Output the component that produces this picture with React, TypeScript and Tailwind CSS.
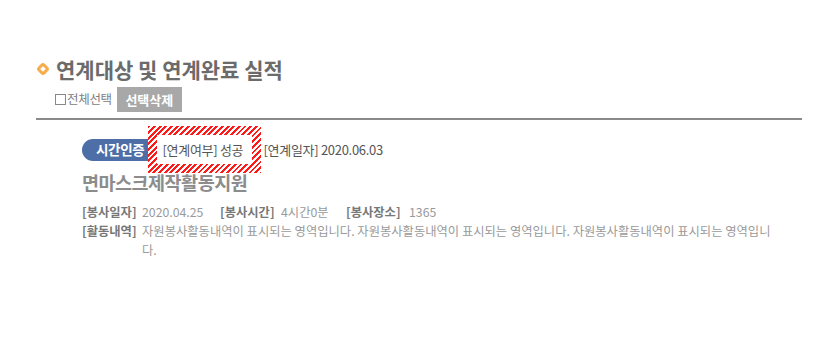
export default function App() {
  const font = { fontFamily: '"Noto Sans CJK KR", "Noto Sans", sans-serif' };
  const hatch =
    "bg-[repeating-linear-gradient(135deg,#ff1a1a_0px,#ff1a1a_2px,#ffffff_2px,#ffffff_4px)]";

  return (
    <div className="w-[838px] h-[360px] bg-white overflow-hidden" style={font}>
      <div className="pt-[54px] pl-[36px] pr-[36px]">
        {/* title */}
        <div className="flex items-center gap-[6px] h-[30px]">
          <span className="w-[14px] h-[14px] flex items-center justify-center">
            <span className="w-[10px] h-[10px] rotate-45 rounded-[3px] border-[3px] border-[#f7ad4a] bg-white" />
          </span>
          <h2 className="text-[21px] font-bold text-[#6b6b6b] leading-none">
            연계대상 및 연계완료 실적
          </h2>
        </div>

        {/* controls */}
        <div className="flex items-center mt-[3px] pl-[19px] h-[25px]">
          <label className="flex items-center text-[12.5px] text-[#808080] tracking-[-0.3px]">
            <span className="w-[11px] h-[11px] border border-[#888] bg-white mr-[1px]" />
            전체선택
          </label>
          <button className="ml-[5px] h-[25px] w-[65px] bg-[#a8a8a8] text-white text-[13px] font-bold flex items-center justify-center">
            선택삭제
          </button>
        </div>

        <div className="mt-[6px] h-[2px] bg-[#8a8a8a] w-[766px]" />

        {/* item */}
        <div className="pl-[46px] pt-[6px]">
          <div className="flex items-center h-[47px]">
            <span className="h-[22px] pl-[14px] pr-[8px] rounded-l-full bg-[#4d6ea6] text-white text-[13.5px] font-bold flex items-center tracking-[-0.3px]">
              시간인증
            </span>
            <span className={`-ml-[4px] p-[9px] ${hatch}`}>
              <span className="block bg-white h-[29px] w-[95px] flex items-center pl-[5px] text-[13px] text-[#555] tracking-[-0.3px]">
                [연계여부] 성공
              </span>
            </span>
            <span className="ml-[2px] text-[13px] text-[#555] tracking-[-0.3px]">
              [연계일자] 2020.06.03
            </span>
          </div>
          <div className="-mt-[4px] text-[18.5px] font-bold text-[#8c8c8c] tracking-[-0.5px] leading-[26px]">
            면마스크제작활동지원
          </div>

          <div className="mt-[8px] text-[12.3px] leading-[19px]">
            <div className="flex">
              <span className="w-[60px] shrink-0 font-bold text-[#777]">[봉사일자]</span>
              <span className="w-[78px] text-[#9a9a9a]">2020.04.25</span>
              <span className="w-[61px] font-bold text-[#777]">[봉사시간]</span>
              <span className="w-[65px] text-[#9a9a9a]">4시간0분</span>
              <span className="w-[63px] font-bold text-[#777]">[봉사장소]</span>
              <span className="text-[#9a9a9a]">1365</span>
            </div>
            <div className="flex">
              <span className="w-[60px] shrink-0 font-bold text-[#777]">[활동내역]</span>
              <span className="w-[650px] text-[#9a9a9a]">
                자원봉사활동내역이 표시되는 영역입니다. 자원봉사활동내역이 표시되는 영역입니다. 자원봉사활동내역이 표시되는 영역입니
                <br />
                다.
              </span>
            </div>
          </div>
        </div>
      </div>
    </div>
  );
}
